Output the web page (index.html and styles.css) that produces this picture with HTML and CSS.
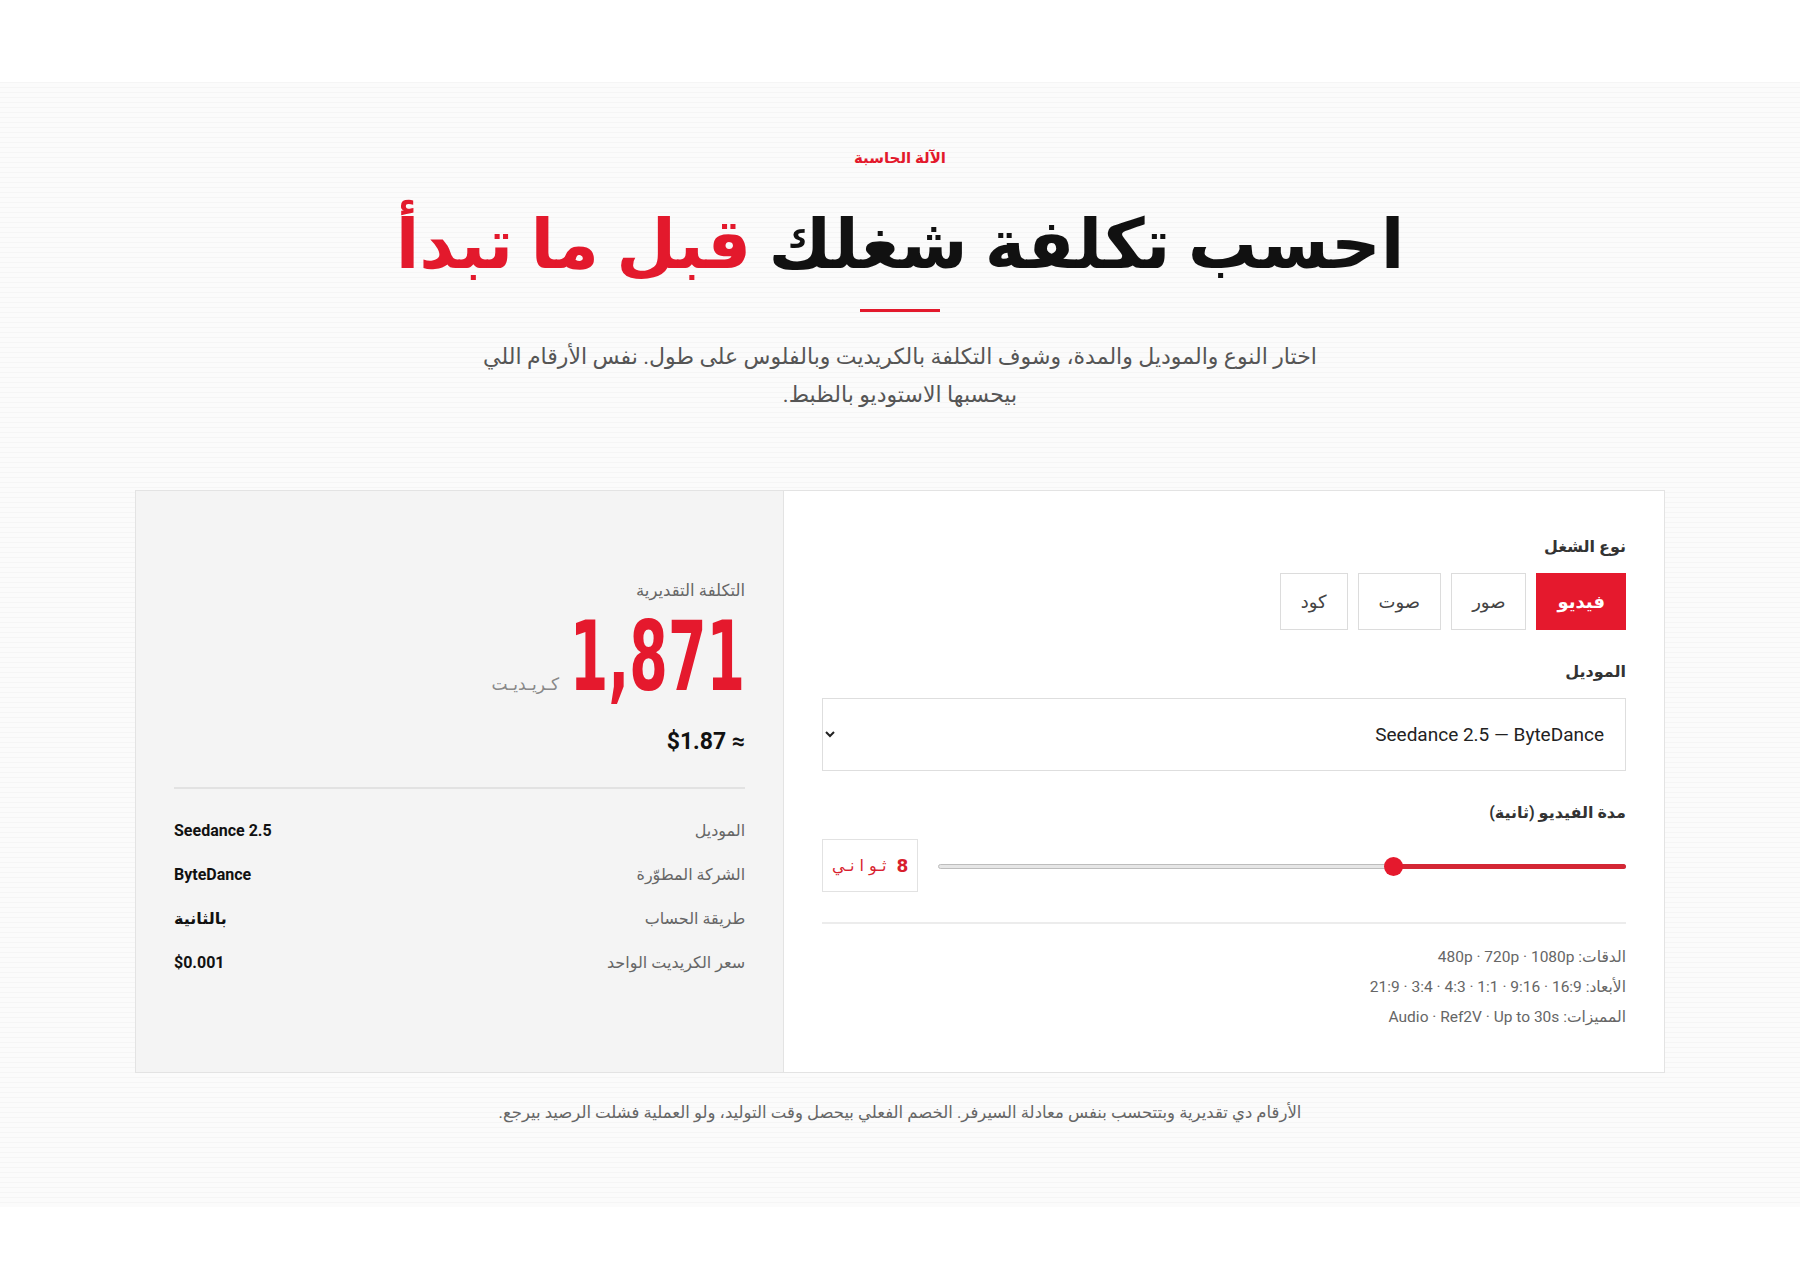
FILE: index.html
```html
<!DOCTYPE html>
<html lang="ar" dir="rtl">
<head>
<meta charset="utf-8">
<title>الآلة الحاسبة</title>
<link rel="stylesheet" href="styles.css">
</head>
<body>
<section class="calc">
  <header class="head">
    <div class="eyebrow">الآلة الحاسبة</div>
    <h1 class="title">احسب تكلفة شغلك <span class="accent">قبل ما تبدأ</span></h1>
    <div class="rule"></div>
    <p class="lead">اختار النوع والموديل والمدة، وشوف التكلفة بالكريديت وبالفلوس على طول. نفس الأرقام اللي<br>بيحسبها الاستوديو بالظبط.</p>
  </header>

  <div class="card">
    <div class="controls">
      <div class="group">
        <div class="label">نوع الشغل</div>
        <div class="types">
          <button class="type active">فيديو</button>
          <button class="type">صور</button>
          <button class="type">صوت</button>
          <button class="type">كود</button>
        </div>
      </div>
      <div class="group">
        <div class="label">الموديل</div>
        <select class="model">
          <option>Seedance 2.5 — ByteDance</option>
        </select>
      </div>
      <div class="group">
        <div class="label">مدة الفيديو (ثانية)</div>
        <div class="duration">
          <div class="slider">
            <div class="track"></div>
            <div class="fill" style="width:33.8%"></div>
            <div class="thumb" style="right:33.8%"></div>
          </div>
          <div class="value"><b>8</b> <span class="unit">ثـو ا نـي</span></div>
        </div>
      </div>
      <div class="specs">
        <div>الدقات: 480p · 720p · 1080p</div>
        <div>الأبعاد: 16:9 · 9:16 · 1:1 · 4:3 · 3:4 · 21:9</div>
        <div>المميزات: Audio · Ref2V · Up to 30s</div>
      </div>
    </div>

    <div class="result">
      <div class="est-label">التكلفة التقديرية</div>
      <div class="amount">
        <span class="num">1,871</span>
        <span class="credit">كـريـديـت</span>
      </div>
      <div class="usd">≈ $1.87</div>
      <div class="rows">
        <div class="row"><span class="k">الموديل</span><span class="v">Seedance 2.5</span></div>
        <div class="row"><span class="k">الشركة المطوّرة</span><span class="v">ByteDance</span></div>
        <div class="row"><span class="k">طريقة الحساب</span><span class="v">بالثانية</span></div>
        <div class="row"><span class="k">سعر الكريديت الواحد</span><span class="v">$0.001</span></div>
      </div>
    </div>
  </div>

  <p class="note">الأرقام دي تقديرية وبتتحسب بنفس معادلة السيرفر. الخصم الفعلي بيحصل وقت التوليد، ولو العملية فشلت الرصيد بيرجع.</p>
</section>
</body>
</html>
```

FILE: styles.css
```css
* { box-sizing: border-box; }

html, body {
  margin: 0;
  padding: 0;
  background: #ffffff;
}

body {
  font-family: "Roboto", "DejaVu Sans", sans-serif;
  color: #222;
  padding-top: 82px;
  min-height: 1265px;
}

.calc {
  height: 1125px;
  padding: 64px 135px 0;
  background-color: #fafafa;
  background-image: repeating-linear-gradient(to bottom, #f5f5f5 0, #f5f5f5 1px, #fbfbfb 1px, #fbfbfb 5px);
}

.head {
  text-align: center;
}

.eyebrow {
  color: #e3192c;
  font-size: 15px;
  font-weight: 700;
  line-height: 24px;
}

.title {
  margin: 27px 0 0;
  font-size: 69px;
  line-height: 96px;
  font-weight: 800;
  color: #111;
  letter-spacing: -1px;
}

.accent { color: #e3192c; }

.rule {
  width: 80px;
  height: 3px;
  background: #e3192c;
  margin: 16px auto 0;
}

.lead {
  margin: 26px auto 0;
  font-size: 22px;
  line-height: 38px;
  color: #555;
}

.card {
  margin-top: 76px;
  display: grid;
  grid-template-columns: 881fr 649fr;
  height: 583px;
  border: 1px solid #e3e3e3;
  background: #fff;
}

.controls {
  padding: 44px 38px 40px;
  display: flex;
  flex-direction: column;
}

.group { margin-bottom: 30px; }

.label {
  font-size: 16px;
  line-height: 24px;
  font-weight: 700;
  color: #333;
  margin-bottom: 14px;
}

.types {
  display: flex;
  gap: 10px;
}

.type {
  height: 57px;
  padding: 0 20px;
  font-family: inherit;
  font-size: 18px;
  color: #444;
  background: #fff;
  border: 1px solid #dcdcdc;
}

.type.active {
  background: #e5192d;
  border-color: #e5192d;
  color: #fff;
  font-weight: 700;
}

.model {
  width: 100%;
  height: 73px;
  padding: 0 17px 0 8px;
  font-family: inherit;
  font-size: 19px;
  color: #222;
  background: #fff;
  border: 1px solid #dedede;
  border-radius: 0;
}

.duration {
  display: flex;
  align-items: center;
  gap: 20px;
}

.slider {
  position: relative;
  flex: 1;
  height: 20px;
}

.track {
  position: absolute;
  left: 0;
  right: 0;
  top: 8px;
  height: 5px;
  border-radius: 3px;
  background: #e6e6e6;
  border: 1px solid #bdbdbd;
}

.fill {
  position: absolute;
  right: 0;
  top: 8px;
  height: 5px;
  border-radius: 3px;
  background: #d42735;
}

.thumb {
  position: absolute;
  top: 1px;
  width: 19px;
  height: 19px;
  margin-right: -9px;
  border-radius: 50%;
  background: #e5192d;
}

.value {
  width: 96px;
  height: 53px;
  flex: none;
  display: flex;
  align-items: center;
  justify-content: center;
  gap: 10px;
  border: 1px solid #e2e2e2;
  color: #d81e2e;
  font-family: "DejaVu Sans", sans-serif;
  font-size: 17px;
}

.value b { font-weight: 700; }

.unit { font-size: 16px; }

.specs {
  border-top: 2px solid #ececec;
  padding-top: 18px;
  font-size: 15.5px;
  line-height: 30px;
  color: #666;
}

.result {
  background: #f4f4f4;
  border-right: 1px solid #e3e3e3;
  padding: 0 38px;
  display: flex;
  flex-direction: column;
  justify-content: center;
}

.est-label {
  font-size: 16.5px;
  line-height: 24px;
  color: #666;
}

.amount {
  display: flex;
  align-items: baseline;
  margin-top: 4px;
}

.num {
  display: inline-block;
  font-family: "DejaVu Sans Condensed", "DejaVu Sans", sans-serif;
  font-weight: 700;
  font-size: 97px;
  line-height: 100px;
  color: #e5192d;
  direction: ltr;
  transform: scaleX(0.635);
  transform-origin: right center;
  margin-left: -104px;
}

.credit {
  margin-right: 14px;
  font-size: 17px;
  color: #888;
}

.usd {
  margin-top: 20px;
  font-size: 23px;
  line-height: 30px;
  font-weight: 700;
  color: #111;
}

.rows {
  margin-top: 30px;
  border-top: 2px solid #e2e2e2;
  padding-top: 20px;
}

.row {
  display: flex;
  justify-content: space-between;
  align-items: center;
  height: 44px;
  font-size: 16px;
}

.row .k { color: #666; }
.row .v { color: #111; font-weight: 700; }

.note {
  margin: 28px 0 0;
  text-align: center;
  font-size: 16.5px;
  line-height: 24px;
  color: #666;
}
```
